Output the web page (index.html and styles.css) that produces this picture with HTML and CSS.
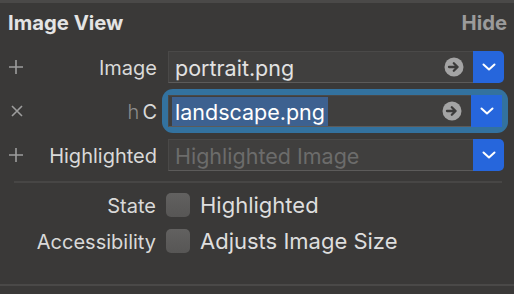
FILE: index.html
```html
<!DOCTYPE html>
<html lang="en">
<head>
  <meta charset="UTF-8" />
  <meta name="viewport" content="width=device-width, initial-scale=1.0"/>
  <title>Image View Inspector</title>
  <link rel="stylesheet" href="styles.css">
</head>
<body>
  <div class="panel">
    <div class="header">
      <span class="title">Image View</span>
      <span class="hide">Hide</span>
    </div>

    <div class="rows">
      <div class="row">
        <span class="mod"><svg width="16" height="16" viewBox="0 0 16 16"><path d="M8 1v14M1 8h14" stroke="#9d9d9d" stroke-width="1.6"/></svg></span>
        <span class="label">Image</span>
        <div class="combo">
          <div class="field">
            <span class="value">portrait.png</span>
            <svg class="go" width="20" height="20" viewBox="0 0 20 20"><circle cx="10" cy="10" r="9.5" fill="#a4a4a4"/><path d="M5 10h8.5M9.8 6.3L13.6 10l-3.8 3.7" fill="none" stroke="#3c3b3a" stroke-width="2.3" stroke-linecap="round" stroke-linejoin="round"/></svg>
          </div>
          <div class="drop"><svg width="14" height="8" viewBox="0 0 14 8"><path d="M1.5 1.5L7 6.5l5.5-5" fill="none" stroke="#fff" stroke-width="2" stroke-linecap="round" stroke-linejoin="round"/></svg></div>
        </div>
      </div>

      <div class="row">
        <span class="mod cross"><svg width="12" height="12" viewBox="0 0 12 12"><path d="M1 1l10 10M11 1L1 11" stroke="#9d9d9d" stroke-width="1.6"/></svg></span>
        <span class="label"><span class="trait">h</span>C</span>
        <div class="combo focus">
          <div class="field">
            <span class="value selected">landscape.png</span>
            <svg class="go" width="20" height="20" viewBox="0 0 20 20"><circle cx="10" cy="10" r="9.5" fill="#a4a4a4"/><path d="M5 10h8.5M9.8 6.3L13.6 10l-3.8 3.7" fill="none" stroke="#3c3b3a" stroke-width="2.3" stroke-linecap="round" stroke-linejoin="round"/></svg>
          </div>
          <div class="drop"><svg width="14" height="8" viewBox="0 0 14 8"><path d="M1.5 1.5L7 6.5l5.5-5" fill="none" stroke="#fff" stroke-width="2" stroke-linecap="round" stroke-linejoin="round"/></svg></div>
        </div>
      </div>

      <div class="row">
        <span class="mod"><svg width="16" height="16" viewBox="0 0 16 16"><path d="M8 1v14M1 8h14" stroke="#9d9d9d" stroke-width="1.6"/></svg></span>
        <span class="label">Highlighted</span>
        <div class="combo">
          <div class="field">
            <span class="value placeholder">Highlighted Image</span>
          </div>
          <div class="drop"><svg width="14" height="8" viewBox="0 0 14 8"><path d="M1.5 1.5L7 6.5l5.5-5" fill="none" stroke="#fff" stroke-width="2" stroke-linecap="round" stroke-linejoin="round"/></svg></div>
        </div>
      </div>
    </div>

    <div class="sep"></div>

    <div class="checks">
      <div class="row check-row">
        <span class="mod"></span>
        <span class="label">State</span>
        <label class="check"><span class="box"></span>Highlighted</label>
      </div>
      <div class="row check-row">
        <span class="mod"></span>
        <span class="label">Accessibility</span>
        <label class="check"><span class="box"></span>Adjusts Image Size</label>
      </div>
    </div>

    <div class="bottom"></div>
  </div>
</body>
</html>
```

FILE: styles.css
```css
body {
  margin: 0;
  background: #3a3938;
  font-family: "Inter", "Open Sans", sans-serif;
  color: #dedede;
}

.panel {
  width: 514px;
  height: 294px;
  border-top: 3px solid #4a4948;
  box-sizing: border-box;
}

.header {
  height: 39px;
  display: flex;
  align-items: center;
  justify-content: space-between;
  padding: 0 7px 0 8px;
  font-weight: 700;
  font-size: 20.3px;
}

.title { color: #e4e4e4; }
.hide { color: #9b9b9b; }

.rows {
  padding-top: 9px;
  display: flex;
  flex-direction: column;
  gap: 12px;
}

.row {
  display: grid;
  grid-template-columns: 25px 121px 336px;
  column-gap: 11px;
  align-items: center;
  height: 32px;
}

.mod {
  display: flex;
  align-items: center;
  padding-left: 8px;
  height: 32px;
}

.mod svg { flex-shrink: 0; }

.mod.cross {
  padding-left: 11px;
}

.label {
  text-align: right;
  font-size: 20px;
  line-height: 24px;
  padding-top: 2px;
  color: #d9d9d9;
  white-space: nowrap;
}

.trait {
  color: #8c8c8c;
  font-weight: 300;
  margin-right: 3px;
}

.combo {
  display: flex;
  height: 32px;
}

.combo.focus {
  margin-right: 2px;
  border-radius: 5px;
  box-shadow: 0 0 0 6px #33729f;
}

.field {
  flex: 1;
  display: flex;
  align-items: center;
  padding-left: 6px;
  background: #403f3e;
  border: 1px solid #4a4948;
  border-bottom-color: #5c5b5a;
  border-right: none;
}

.value {
  flex: 1;
  font-size: 21.5px;
  line-height: 28px;
  padding-top: 1px;
  color: #e2e2e2;
  white-space: nowrap;
}

.value.selected {
  flex: none;
  margin-left: -3px;
  padding: 1px 3px 0;
  background: #3d6190;
  color: #ffffff;
  margin-right: auto;
}

.value.placeholder { color: #6c6c6b; }

.go {
  margin-right: 9px;
}

.drop {
  width: 31px;
  display: flex;
  align-items: center;
  justify-content: center;
  background: #2666dc;
  border-radius: 0 5px 5px 0;
}

.combo.focus .drop { border-radius: 0; }

.sep {
  margin: 10px 12px 0 14px;
  height: 2px;
  background: #474645;
}

.checks {
  padding-top: 9px;
  display: flex;
  flex-direction: column;
  gap: 12px;
}

.check-row {
  height: 24px;
  column-gap: 10px;
}

.check-row .mod { height: 24px; }

.check {
  display: flex;
  align-items: center;
  gap: 10px;
  font-size: 22px;
  line-height: 24px;
  color: #dedede;
}

.box {
  width: 24px;
  height: 24px;
  border-radius: 5px;
  background: linear-gradient(#626160, #575655);
  box-sizing: border-box;
}

.bottom {
  margin-top: 32px;
  height: 2px;
  background: #4a4948;
}
```
